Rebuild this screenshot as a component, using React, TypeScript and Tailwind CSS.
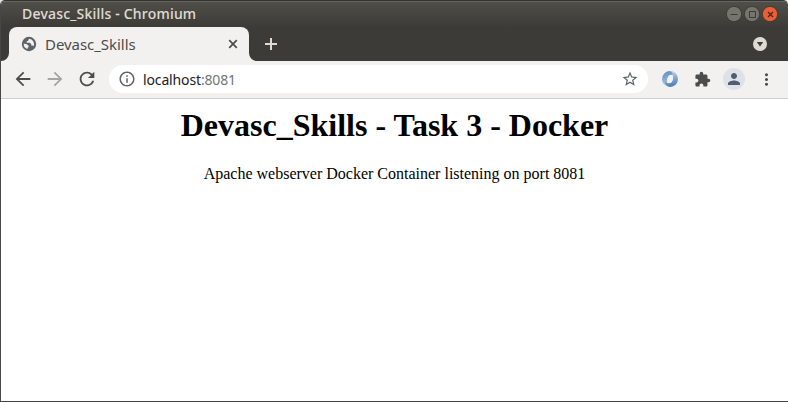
import { MdArrowBack, MdArrowForward, MdExtension, MdInfoOutline, MdMoreVert, MdPerson, MdRefresh, MdStarBorder } from "react-icons/md";

function GlobeIcon() {
  return (
    <svg viewBox="0 0 16 16" className="size-4 shrink-0">
      <circle cx="8" cy="8" r="7.2" fill="#5f6368" />
      <path d="M8.6 2.8 7.3 3.7v1L5.6 5.5v1.3h3.2l1.4 1.2v1.5h1.4l1 .7A5.4 5.4 0 0 0 8.6 2.8Z" fill="#f2f1f0" />
      <path d="M2.7 7.8 5.4 8l2.2 1.7v1.4l-1 .7v1.3A5.4 5.4 0 0 1 2.7 7.8Z" fill="#f2f1f0" />
    </svg>
  );
}

function SwirlIcon() {
  return (
    <svg viewBox="0 0 16 16" className="size-4">
      <defs>
        <linearGradient id="swirlLeft" x1="0.2" y1="0" x2="0.4" y2="1">
          <stop offset="0" stopColor="#5f8fc0" />
          <stop offset="0.5" stopColor="#86abd0" />
          <stop offset="1" stopColor="#c3d8ea" />
        </linearGradient>
        <linearGradient id="swirlRight" x1="0.4" y1="0" x2="0.5" y2="1">
          <stop offset="0" stopColor="#c4d7e8" />
          <stop offset="0.5" stopColor="#7ea5cc" />
          <stop offset="1" stopColor="#4a7cb2" />
        </linearGradient>
      </defs>
      <path d="M8.2.1A7.9 7.9 0 0 0 .1 8c0 4.5 3.4 7.9 7.9 7.9-2-1-2.9-2.3-2.7-4.2C4.7 8 5.6 4.6 9.3 3.9c1.7-.2 3.2.7 4.2 2.4C13.4 3 11.5.6 8.2.1Z" fill="url(#swirlLeft)" />
      <path d="M8.2.1c4.4 0 7.7 3.5 7.7 7.9 0 4.6-3.4 7.9-7.9 7.9-3.3-.4-5.2-2.8-5.4-6.2 1 1.7 2.4 2.7 4.2 2.5 3.7-.5 4.6-4.1 4-7.8C10.6 2.4 10 .9 8.2.1Z" fill="url(#swirlRight)" />
      <path d="M8.8 4.1c1.4.3 2.1 1.7 2 3.8-.1 2.3-1.2 4-2.9 4-1.6-.2-2.4-1.7-2.3-3.9.1-2.2 1.4-4.1 3.2-3.9Z" fill="#f2f1f0" />
    </svg>
  );
}

function WindowButtons() {
  return (
    <div className="mr-[10px] flex gap-[2px]">
      <svg viewBox="0 0 16 16" className="size-4">
        <circle cx="8" cy="8" r="7.6" fill="#75746d" stroke="#34332e" strokeWidth="0.7" />
        <path d="M4.5 8.5h7" stroke="#3c3b37" />
      </svg>
      <svg viewBox="0 0 16 16" className="size-4">
        <circle cx="8" cy="8" r="7.6" fill="#75746d" stroke="#34332e" strokeWidth="0.7" />
        <path d="M5.5 5.5h6v6h-6z" fill="none" stroke="#3c3b37" />
      </svg>
      <svg viewBox="0 0 16 16" className="size-4">
        <circle cx="8" cy="8" r="7.6" fill="#ec5f34" stroke="#34332e" strokeWidth="0.7" />
        <path d="m6 6 5 5m0-5-5 5" stroke="#43271b" strokeWidth="1.3" />
      </svg>
    </div>
  );
}

function TitleBar() {
  return (
    <header className="flex h-[27px] items-center justify-between border-t border-[#34332f] bg-gradient-to-b from-[#504f49] to-[#3d3b37] shadow-[inset_0_1px_0_#66655f]">
      <h2 className="ml-[21px] whitespace-nowrap font-['Noto_Sans',sans-serif] text-[14px] leading-5 font-medium tracking-[0.2px] text-[#dfdbd2] [-webkit-text-stroke:0.1px_#dfdbd2]">
        Devasc_Skills - Chromium
      </h2>
      <WindowButtons />
    </header>
  );
}

function TabStrip() {
  return (
    <div className="flex h-[34px] items-stretch bg-[#3c3b37]">
      <svg viewBox="0 0 8 34" className="h-[34px] w-2">
        <path d="M8 26v8H0a8 8 0 0 0 8-8Z" fill="#f2f1f0" />
      </svg>
      <div className="flex w-[240px] items-center rounded-t-lg bg-[#f2f1f0] pr-[10px] pl-3">
        <GlobeIcon />
        <span className="ml-2 flex-1 whitespace-nowrap font-['Noto_Sans',sans-serif] text-[15px] leading-5 tracking-[-0.05px] text-[#4c4c4c]">Devasc_Skills</span>
        <svg viewBox="0 0 12 12" className="size-3">
          <path d="m2.2 2.2 7.6 7.6m0-7.6L2.2 9.8" stroke="#4c4c4c" strokeWidth="1.7" />
        </svg>
      </div>
      <svg viewBox="0 0 9 34" className="h-[34px] w-[9px]">
        <path d="M0 26v8h8a8 8 0 0 1-8-8Z" fill="#f2f1f0" />
      </svg>
      <svg viewBox="0 0 14 14" className="ml-[6px] size-[14px] self-center">
        <path d="M7 1v12M1 7h12" stroke="#dfdbd2" strokeWidth="2" />
      </svg>
      <svg viewBox="0 0 14 14" className="mr-[21px] ml-auto size-[14px] self-center">
        <circle cx="7" cy="7" r="7" fill="#dfdbd2" />
        <path d="M3.8 5h6.4L7 9.4Z" fill="#3c3b37" />
      </svg>
    </div>
  );
}

function Toolbar() {
  return (
    <div className="flex h-[38px] items-center border-b border-[#cecece] bg-[#f2f1f0] pb-[1px] text-[#4c4c4c]">
      <MdArrowBack className="ml-[11px] size-[22px]" />
      <MdArrowForward className="ml-[10px] size-[22px] text-[#a6a5a4]" />
      <MdRefresh className="ml-[10px] size-[22px]" />
      <div className="ml-[11px] flex h-7 w-[539px] items-center rounded-full bg-white pr-[9px] pl-[9px]">
        <MdInfoOutline className="size-[18px] text-[#5f6368]" />
        <span className="ml-[7px] flex-1 whitespace-nowrap font-['Noto_Sans',sans-serif] text-[14px] tracking-[-0.14px] text-[#202124]">
          localhost<span className="text-[#70757a]">:8081</span>
        </span>
        <MdStarBorder className="size-[18px] text-[#5f6368]" />
      </div>
      <div className="ml-[14px]"><SwirlIcon /></div>
      <MdExtension className="ml-4 size-[17px]" />
      <div className="ml-[12px] flex size-[22px] items-center justify-center rounded-full bg-[#dee1e6] text-[#505c73]">
        <MdPerson className="size-[18px]" />
      </div>
      <MdMoreVert className="ml-[12px] size-[19px]" />
    </div>
  );
}

export default function App() {
  return (
    <div className="h-[402px] w-[788px] overflow-hidden bg-[#e8e8e8]">
      <div className="flex h-full flex-col overflow-hidden rounded-t-[5px] border-b border-l border-[#474747] bg-white">
        <TitleBar />
        <TabStrip />
        <Toolbar />
        <main className="flex-1 text-center font-['Liberation_Serif',serif] text-black">
          <h1 className="mt-[8px] text-[32px] leading-[36px] font-bold">Devasc_Skills - Task 3 - Docker</h1>
          <p className="mt-[22px] text-[16px] leading-[18px]">Apache webserver Docker Container listening on port 8081</p>
        </main>
      </div>
    </div>
  );
}
